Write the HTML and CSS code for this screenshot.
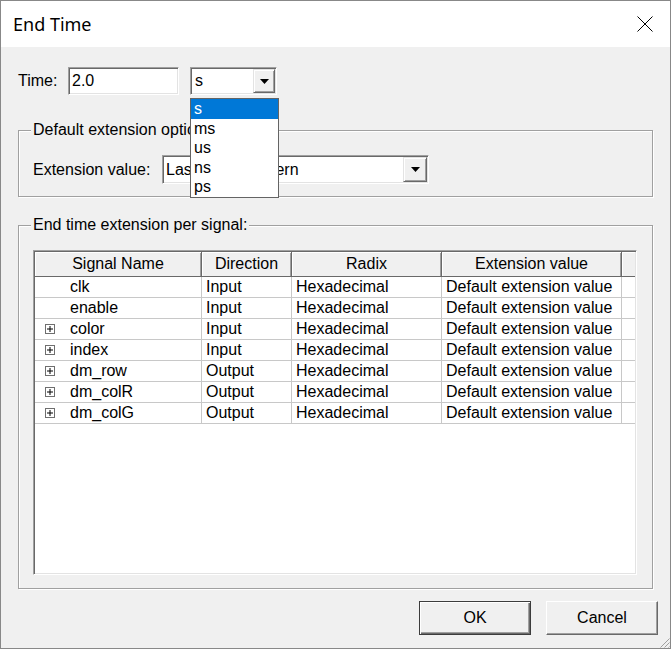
FILE: index.html
```html
<!DOCTYPE html>
<html>
<head>
<meta charset="utf-8">
<title>End Time</title>
<link rel="stylesheet" href="styles.css">
</head>
<body>
<div class="window">
  <div class="titlebar">
    <span class="title">End Time</span>
    <svg class="close" width="16" height="16" viewBox="0 0 16 16"><path d="M0.5 0.5L15.5 15.5M15.5 0.5L0.5 15.5" stroke="#000" stroke-width="1" fill="none"/></svg>
  </div>
  <div class="client">
    <div class="time-row">
      <span class="lbl time-lbl">Time:</span>
      <div class="field time-input">2.0</div>
      <div class="combo time-combo">
        <span class="combo-text">s</span>
        <span class="drop-btn"><svg width="9" height="5" viewBox="0 0 9 5"><polygon points="0,0 9,0 4.5,5" fill="#000"/></svg></span>
        <ul class="drop-list">
          <li class="sel">s</li>
          <li>ms</li>
          <li>us</li>
          <li>ns</li>
          <li>ps</li>
        </ul>
      </div>
    </div>

    <fieldset class="group g1">
      <legend>Default extension options</legend>
      <div class="ext-row">
        <span class="lbl ext-lbl">Extension value:</span>
        <div class="combo ext-combo">
          <span class="combo-text">Last driven pattern</span>
          <span class="drop-btn"><svg width="9" height="5" viewBox="0 0 9 5"><polygon points="0,0 9,0 4.5,5" fill="#000"/></svg></span>
        </div>
      </div>
    </fieldset>

    <fieldset class="group g2">
      <legend>End time extension per signal:</legend>
      <div class="lv">
        <div class="lv-head">
          <div>Signal Name</div>
          <div>Direction</div>
          <div>Radix</div>
          <div>Extension value</div>
          <div class="last"></div>
        </div>
        <div class="lv-row">
          <div class="name">clk</div><div>Input</div><div>Hexadecimal</div><div>Default extension value</div><div class="last"></div>
        </div>
        <div class="lv-row">
          <div class="name">enable</div><div>Input</div><div>Hexadecimal</div><div>Default extension value</div><div class="last"></div>
        </div>
        <div class="lv-row">
          <div class="name exp"><svg class="plus" width="10" height="10" viewBox="0 0 10 10"><rect x="0.5" y="0.5" width="9" height="9" fill="#fff" stroke="#6e6e6e"/><path d="M2 5H8M5 2V8" stroke="#000"/></svg>color</div><div>Input</div><div>Hexadecimal</div><div>Default extension value</div><div class="last"></div>
        </div>
        <div class="lv-row">
          <div class="name exp"><svg class="plus" width="10" height="10" viewBox="0 0 10 10"><rect x="0.5" y="0.5" width="9" height="9" fill="#fff" stroke="#6e6e6e"/><path d="M2 5H8M5 2V8" stroke="#000"/></svg>index</div><div>Input</div><div>Hexadecimal</div><div>Default extension value</div><div class="last"></div>
        </div>
        <div class="lv-row">
          <div class="name exp"><svg class="plus" width="10" height="10" viewBox="0 0 10 10"><rect x="0.5" y="0.5" width="9" height="9" fill="#fff" stroke="#6e6e6e"/><path d="M2 5H8M5 2V8" stroke="#000"/></svg>dm_row</div><div>Output</div><div>Hexadecimal</div><div>Default extension value</div><div class="last"></div>
        </div>
        <div class="lv-row">
          <div class="name exp"><svg class="plus" width="10" height="10" viewBox="0 0 10 10"><rect x="0.5" y="0.5" width="9" height="9" fill="#fff" stroke="#6e6e6e"/><path d="M2 5H8M5 2V8" stroke="#000"/></svg>dm_colR</div><div>Output</div><div>Hexadecimal</div><div>Default extension value</div><div class="last"></div>
        </div>
        <div class="lv-row">
          <div class="name exp"><svg class="plus" width="10" height="10" viewBox="0 0 10 10"><rect x="0.5" y="0.5" width="9" height="9" fill="#fff" stroke="#6e6e6e"/><path d="M2 5H8M5 2V8" stroke="#000"/></svg>dm_colG</div><div>Output</div><div>Hexadecimal</div><div>Default extension value</div><div class="last"></div>
        </div>
      </div>
    </fieldset>

    <div class="buttons">
      <button class="btn default">OK</button>
      <button class="btn">Cancel</button>
    </div>
  </div>
  <svg class="grip" width="12" height="12" viewBox="0 0 12 12"><path d="M11.5 2.5L2.5 11.5M11.5 6.5L6.5 11.5M11.5 10.5L10.5 11.5" stroke="#a0a0a0" stroke-width="1"/></svg>
</div>
</body>
</html>
```
FILE: styles.css
```css
* { box-sizing: border-box; }
html, body { margin: 0; padding: 0; }
body {
  width: 671px;
  height: 649px;
  overflow: hidden;
  background: #f0f0f0;
  font-family: "Liberation Sans", Arial, sans-serif;
  font-size: 16px;
  color: #000;
}
.window {
  position: relative;
  width: 671px;
  height: 649px;
  border: 1px solid #888;
  background: #f0f0f0;
  display: flex;
  flex-direction: column;
}
.titlebar {
  flex: none;
  height: 46px;
  background: #fff;
  display: flex;
  align-items: center;
  justify-content: space-between;
  padding: 0 17px 0 12px;
}
.title {
  font-family: "Noto Sans", "Open Sans", sans-serif;
  font-size: 18px;
  line-height: 24px;
}
.close { display: block; }
.client {
  flex: 1;
  padding: 20px 12px 0 17px;
}
.lbl { line-height: 18px; white-space: nowrap; }
.time-row {
  display: flex;
  align-items: center;
  height: 28px;
}
.time-lbl { width: 50px; }
.field, .combo, .lv {
  background: #fff;
  border: 1px solid;
  border-color: #a0a0a0 #fff #fff #a0a0a0;
  box-shadow: inset 1px 1px 0 #696969, inset -1px -1px 0 #e3e3e3;
}
.time-input {
  width: 111px;
  height: 28px;
  padding: 0 3px;
  line-height: 26px;
}
.combo {
  position: relative;
  display: flex;
  padding: 1px;
}
.time-combo { width: 87px; height: 28px; margin-left: 11px; }
.combo-text {
  flex: 1;
  padding-left: 3px;
  line-height: 24px;
  white-space: nowrap;
  overflow: hidden;
}
.ext-combo .combo-text { line-height: 25px; padding-left: 2px; }
.drop-btn {
  flex: none;
  width: 22px;
  display: flex;
  align-items: center;
  justify-content: center;
  background: #f0f0f0;
  border: 1px solid;
  border-color: #e3e3e3 #696969 #696969 #e3e3e3;
  box-shadow: inset 1px 1px 0 #fff, inset -1px -1px 0 #a0a0a0;
}
.drop-btn svg { display: block; }
.ext-combo .drop-btn { width: 24px; }
.drop-list {
  position: absolute;
  left: -1px;
  top: 30px;
  width: 89px;
  margin: 0;
  padding: 0;
  list-style: none;
  background: #fff;
  border: 1px solid #646464;
  z-index: 5;
}
.drop-list li {
  height: 19.6px;
  line-height: 19.6px;
  padding-left: 3px;
}
.drop-list li.sel { background: #0078d7; color: #fff; }

.group {
  margin: 0 5px 0 0;
  padding: 16px 15px 12px 14px;
  border: 1px solid #a0a0a0;
  box-shadow: 1px 1px 0 #fff, inset 1px 1px 0 #fff;
  min-inline-size: 0;
}
.group legend {
  padding: 0 2px;
  margin-left: -2px;
  line-height: 18px;
  background: #f0f0f0;
}
.g1 { margin-top: 26px; }
.g2 { margin-top: 19px; padding-bottom: 13px; }
.ext-row { display: flex; align-items: center; }
.ext-lbl { width: 129px; }
.ext-combo { width: 267px; height: 29px; }

.lv {
  height: 325px;
  padding: 1px;
  overflow: hidden;
}
.lv-head, .lv-row {
  display: grid;
  grid-template-columns: 167px 90px 150px 180px 1fr;
}
.lv-head { height: 25px; }
.lv-head > div {
  background: #f0f0f0;
  text-align: center;
  line-height: 23px;
  border-right: 1px solid #696969;
  border-bottom: 1px solid #696969;
  box-shadow: inset 1px 1px 0 #fff, inset -1px 0 0 #a0a0a0;
  white-space: nowrap;
}
.lv-head > div.last { border-right: none; box-shadow: inset 1px 1px 0 #fff; }
.lv-row { height: 21px; }
.lv-row > div {
  border-right: 1px solid #c8c8c8;
  border-bottom: 1px solid #c8c8c8;
  padding-left: 4px;
  line-height: 20px;
  white-space: nowrap;
  overflow: hidden;
}
.lv-row > div.last { border-right: none; }
.lv-row > div.name { padding-left: 35px; }
.lv-row > div.name.exp { padding-left: 10px; display: flex; align-items: center; }
.plus { display: block; margin-right: 15px; flex: none; }

.buttons {
  display: flex;
  justify-content: flex-end;
  gap: 15px;
  margin-top: 12px;
}
.btn {
  width: 112px;
  height: 34px;
  padding: 0;
  font-family: "Liberation Sans", Arial, sans-serif;
  font-size: 16px;
  color: #000;
  background: #f0f0f0;
  border: 1px solid;
  border-color: #fff #696969 #696969 #fff;
  box-shadow: inset -1px -1px 0 #a0a0a0;
}
.btn.default {
  border-color: #3c3c3c;
  box-shadow: inset 1px 1px 0 #fff, inset -1px -1px 0 #696969, inset -2px -2px 0 #a0a0a0;
}
.grip {
  position: absolute;
  right: 0;
  bottom: 0;
}
```
